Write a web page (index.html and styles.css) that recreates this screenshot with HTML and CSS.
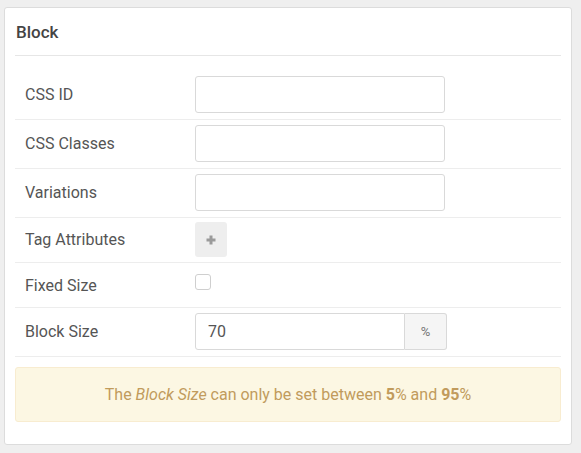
FILE: index.html
```html
<!DOCTYPE html>
<html>
<head>
<meta charset="utf-8">
<link rel="stylesheet" href="styles.css">
</head>
<body>
<div class="card">
  <div class="card-header">Block</div>
  <div class="form">
    <div class="row">
      <div class="label">CSS ID</div>
      <div class="control"><input class="text" type="text"></div>
    </div>
    <div class="row">
      <div class="label">CSS Classes</div>
      <div class="control"><input class="text" type="text"></div>
    </div>
    <div class="row">
      <div class="label">Variations</div>
      <div class="control"><input class="text" type="text"></div>
    </div>
    <div class="row row-btn">
      <div class="label">Tag Attributes</div>
      <div class="control">
        <button class="add-btn" type="button">
          <svg width="10" height="10" viewBox="0 0 10 10"><path d="M5 0.5v9M0.5 5h9" stroke="#9a9a9a" stroke-width="3"/></svg>
        </button>
      </div>
    </div>
    <div class="row row-check">
      <div class="label">Fixed Size</div>
      <div class="control control-check"><span class="checkbox"></span></div>
    </div>
    <div class="row">
      <div class="label">Block Size</div>
      <div class="control">
        <div class="group"><input class="text text-group" type="text" value="70"><span class="addon">%</span></div>
      </div>
    </div>
  </div>
  <div class="alert"><span>The <em>Block Size</em> can only be set between <strong>5</strong>% and <strong>95</strong>%</span></div>
</div>
</body>
</html>
```

FILE: styles.css
```css
* { box-sizing: border-box; }
html, body { margin: 0; padding: 0; }
body {
  background: #efefef;
  font-family: Roboto, "Liberation Sans", Arial, sans-serif;
  color: #555;
  padding: 7px 9px 8px 4px;
}
.card {
  width: 568px;
  height: 438px;
  background: #fff;
  border: 1px solid #dcdcdc;
  border-radius: 3px;
  padding: 0 10px 0 10px;
}
.card-header {
  height: 48px;
  line-height: 48px;
  padding-left: 1px;
  font-size: 17px;
  font-weight: 500;
  color: #444;
  border-bottom: 1px solid #e6e6e6;
}
.form { padding-top: 15px; }
.row {
  display: grid;
  grid-template-columns: 180px 1fr;
  align-items: center;
  padding: 5px 0 6px 0;
  border-bottom: 1px solid #ededed;
}
.row-btn { padding: 4px 0 5px 0; }
.row-check { padding: 5px 0 5px 0; }
.label {
  padding-left: 10px;
  font-size: 16px;
  color: #555;
}
.control { display: flex; align-items: center; }
.control-check { height: 34px; align-items: flex-start; }
.text {
  width: 250px;
  height: 37px;
  border: 1px solid #d9d9d9;
  border-radius: 3px;
  padding: 0 12px;
  font-family: inherit;
  font-size: 16px;
  color: #555;
  background: #fff;
  outline: none;
}
.group { display: flex; }
.text-group {
  width: 210px;
  border-radius: 3px 0 0 3px;
}
.addon {
  width: 42px;
  height: 37px;
  border: 1px solid #d9d9d9;
  border-left: none;
  border-radius: 0 3px 3px 0;
  background: #f5f5f5;
  color: #777;
  font-size: 13px;
  display: flex;
  align-items: center;
  justify-content: center;
}
.add-btn {
  width: 32px;
  height: 35px;
  border: none;
  border-radius: 3px;
  background: #eeeeee;
  padding: 0;
  display: flex;
  align-items: center;
  justify-content: center;
}
.checkbox {
  margin-top: 6px;
  width: 16px;
  height: 16px;
  border: 1px solid #cfcfcf;
  border-radius: 3px;
  background: #fff;
  display: block;
}
.alert {
  margin-top: 10px;
  height: 55px;
  background: #fcf7e3;
  border: 1px solid #f8ecd0;
  border-radius: 3px;
  color: #c19b5c;
  font-size: 16px;
  display: flex;
  align-items: center;
  justify-content: center;
}
.alert strong { font-weight: 700; }
.alert em { font-style: italic; }
```
